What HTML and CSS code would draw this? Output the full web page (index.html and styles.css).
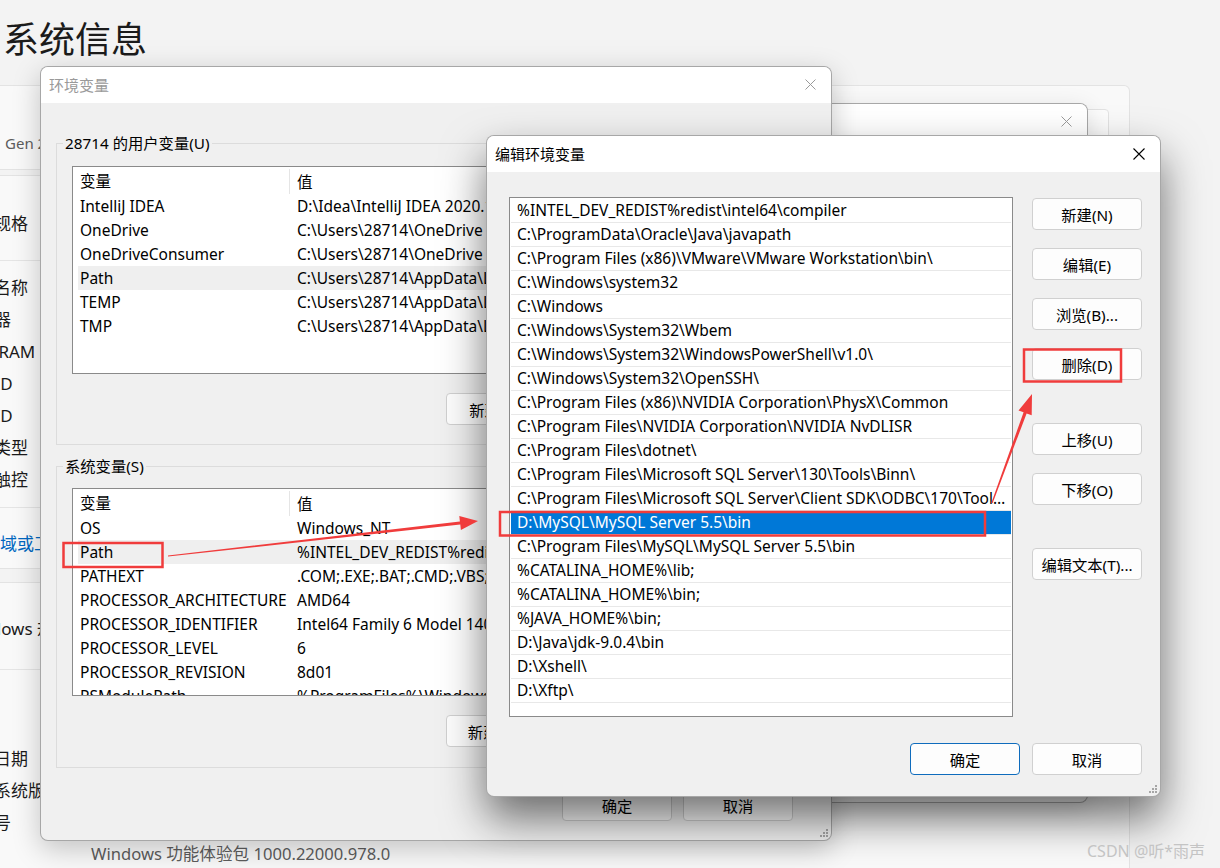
FILE: index.html
```html
<!DOCTYPE html>
<html lang="zh-CN">
<head>
<meta charset="utf-8">
<title>编辑环境变量</title>
<link rel="stylesheet" href="styles.css">
</head>
<body>
<main class="settings">
  <h1 class="page-title">系统信息</h1>
  <section class="card card-device">
    <div class="device-model">Gen 2</div>
    <button class="rename-btn">重命名这台电脑</button>
  </section>
  <section class="card card-spec">
    <div class="card-head"><span class="lbl">设备规格</span></div>
    <div class="spec-list">
      <div class="spec-row"><span class="lbl">设备名称</span></div>
      <div class="spec-row"><span class="lbl">处理器</span></div>
      <div class="spec-row"><span class="lbl">机带 RAM</span></div>
      <div class="spec-row"><span class="lbl lbl-id">设备 ID</span></div>
      <div class="spec-row"><span class="lbl lbl-id">产品 ID</span></div>
      <div class="spec-row"><span class="lbl">系统类型</span></div>
      <div class="spec-row"><span class="lbl">笔和触控</span></div>
    </div>
    <div class="links"><a class="link">域或工作组</a></div>
  </section>
  <section class="card card-win">
    <div class="card-head card-head-win"><span class="lbl">Windows 规格</span></div>
    <div class="spec-list spec-list-win">
      <div class="spec-row"><span class="lbl">版本</span></div>
      <div class="spec-row"><span class="lbl">版本</span></div>
      <div class="spec-row"><span class="lbl">安装日期</span></div>
      <div class="spec-row"><span class="lbl">操作系统版本</span></div>
      <div class="spec-row"><span class="lbl">序列号</span></div>
      <div class="spec-row"><span class="lbl">体验</span><span class="val">Windows 功能体验包 1000.22000.978.0</span></div>
    </div>
  </section>
</main>

<div class="win win-sysprop">
  <div class="titlebar inactive">
    <span class="title">系统属性</span>
    <svg class="close" width="11" height="11" viewBox="0 0 11 11"><path d="M0.5 0.5L10.5 10.5M10.5 0.5L0.5 10.5" stroke="currentColor" stroke-width="1" fill="none"/></svg>
  </div>
</div>

<div class="win win-env">
  <div class="titlebar inactive">
    <span class="title">环境变量</span>
    <svg class="close" width="11" height="11" viewBox="0 0 11 11"><path d="M0.5 0.5L10.5 10.5M10.5 0.5L0.5 10.5" stroke="currentColor" stroke-width="1" fill="none"/></svg>
  </div>
  <div class="env-body">
    <fieldset class="group group-user">
      <legend>28714 的用户变量(U)</legend>
      <div class="listview env-lv">
        <div class="lv-head"><div class="c1">变量</div><div class="c2">值</div></div>
        <div class="lv-row"><div class="c1">IntelliJ IDEA</div><div class="c2">D:\Idea\IntelliJ IDEA 2020.1\bin;</div></div>
        <div class="lv-row"><div class="c1">OneDrive</div><div class="c2">C:\Users\28714\OneDrive</div></div>
        <div class="lv-row"><div class="c1">OneDriveConsumer</div><div class="c2">C:\Users\28714\OneDrive</div></div>
        <div class="lv-row hl"><div class="c1">Path</div><div class="c2">C:\Users\28714\AppData\Local\Microsoft\WindowsApps;</div></div>
        <div class="lv-row"><div class="c1">TEMP</div><div class="c2">C:\Users\28714\AppData\Local\Temp</div></div>
        <div class="lv-row"><div class="c1">TMP</div><div class="c2">C:\Users\28714\AppData\Local\Temp</div></div>
      </div>
      <div class="group-btns">
        <button class="btn">新建(N)...</button>
        <button class="btn">编辑(E)...</button>
        <button class="btn">删除(D)</button>
      </div>
    </fieldset>
    <fieldset class="group group-sys">
      <legend>系统变量(S)</legend>
      <div class="listview env-lv env-lv-sys">
        <div class="lv-head"><div class="c1">变量</div><div class="c2">值</div></div>
        <div class="lv-row"><div class="c1">OS</div><div class="c2">Windows_NT</div></div>
        <div class="lv-row hl"><div class="c1">Path</div><div class="c2">%INTEL_DEV_REDIST%redist\intel64\compiler;C:\ProgramData\Oracle\Java\javapath</div></div>
        <div class="lv-row"><div class="c1">PATHEXT</div><div class="c2">.COM;.EXE;.BAT;.CMD;.VBS;.VBE;.JS;.JSE;.WSF;.WSH;.MSC</div></div>
        <div class="lv-row"><div class="c1">PROCESSOR_ARCHITECTURE</div><div class="c2">AMD64</div></div>
        <div class="lv-row"><div class="c1">PROCESSOR_IDENTIFIER</div><div class="c2">Intel64 Family 6 Model 140 Stepping 1, GenuineIntel</div></div>
        <div class="lv-row"><div class="c1">PROCESSOR_LEVEL</div><div class="c2">6</div></div>
        <div class="lv-row"><div class="c1">PROCESSOR_REVISION</div><div class="c2">8d01</div></div>
        <div class="lv-row"><div class="c1">PSModulePath</div><div class="c2">%ProgramFiles%\WindowsPowerShell\Modules</div></div>
      </div>
      <div class="group-btns">
        <button class="btn">新建(W)...</button>
        <button class="btn">编辑(I)...</button>
        <button class="btn">删除(L)</button>
      </div>
    </fieldset>
    <div class="dlg-footer env-footer">
      <button class="btn">确定</button>
      <button class="btn">取消</button>
    </div>
  </div>
  <svg class="grip" width="9" height="9" viewBox="0 0 9 9"><g fill="#a6a6a6"><rect x="7" y="1" width="2" height="2"/><rect x="4" y="4" width="2" height="2"/><rect x="7" y="4" width="2" height="2"/><rect x="1" y="7" width="2" height="2"/><rect x="4" y="7" width="2" height="2"/><rect x="7" y="7" width="2" height="2"/></g></svg>
</div>

<div class="win win-edit">
  <div class="titlebar">
    <span class="title">编辑环境变量</span>
    <svg class="close" width="12" height="12" viewBox="0 0 12 12"><path d="M0.5 0.5L11.5 11.5M11.5 0.5L0.5 11.5" stroke="currentColor" stroke-width="1.1" fill="none"/></svg>
  </div>
  <div class="edit-body">
    <div class="listview edit-lv">
      <div class="path-row">%INTEL_DEV_REDIST%redist\intel64\compiler</div>
      <div class="path-row">C:\ProgramData\Oracle\Java\javapath</div>
      <div class="path-row">C:\Program Files (x86)\VMware\VMware Workstation\bin\</div>
      <div class="path-row">C:\Windows\system32</div>
      <div class="path-row">C:\Windows</div>
      <div class="path-row">C:\Windows\System32\Wbem</div>
      <div class="path-row">C:\Windows\System32\WindowsPowerShell\v1.0\</div>
      <div class="path-row">C:\Windows\System32\OpenSSH\</div>
      <div class="path-row">C:\Program Files (x86)\NVIDIA Corporation\PhysX\Common</div>
      <div class="path-row">C:\Program Files\NVIDIA Corporation\NVIDIA NvDLISR</div>
      <div class="path-row">C:\Program Files\dotnet\</div>
      <div class="path-row">C:\Program Files\Microsoft SQL Server\130\Tools\Binn\</div>
      <div class="path-row">C:\Program Files\Microsoft SQL Server\Client SDK\ODBC\170\Tools\Binn\</div>
      <div class="path-row sel">D:\MySQL\MySQL Server 5.5\bin</div>
      <div class="path-row">C:\Program Files\MySQL\MySQL Server 5.5\bin</div>
      <div class="path-row">%CATALINA_HOME%\lib;</div>
      <div class="path-row">%CATALINA_HOME%\bin;</div>
      <div class="path-row">%JAVA_HOME%\bin;</div>
      <div class="path-row">D:\Java\jdk-9.0.4\bin</div>
      <div class="path-row">D:\Xshell\</div>
      <div class="path-row">D:\Xftp\</div>
    </div>
    <div class="edit-side">
      <button class="btn">新建(N)</button>
      <button class="btn">编辑(E)</button>
      <button class="btn">浏览(B)...</button>
      <button class="btn">删除(D)</button>
      <button class="btn gap-before">上移(U)</button>
      <button class="btn">下移(O)</button>
      <button class="btn gap-before">编辑文本(T)...</button>
    </div>
  </div>
  <div class="dlg-footer edit-footer">
    <button class="btn default">确定</button>
    <button class="btn">取消</button>
  </div>
  <svg class="grip" width="9" height="9" viewBox="0 0 9 9"><g fill="#a6a6a6"><rect x="7" y="1" width="2" height="2"/><rect x="4" y="4" width="2" height="2"/><rect x="7" y="4" width="2" height="2"/><rect x="1" y="7" width="2" height="2"/><rect x="4" y="7" width="2" height="2"/><rect x="7" y="7" width="2" height="2"/></g></svg>
</div>

<svg class="annot" width="1220" height="868" viewBox="0 0 1220 868">
  <g fill="none" stroke="#f03c3c" stroke-width="2.5">
    <rect x="63.5" y="543" width="99" height="24"/>
    <rect x="500" y="512" width="485" height="23.5"/>
    <rect x="1024" y="349.5" width="97" height="32"/>
  </g>
  <g fill="#f03c3c">
    <polygon points="168,555.4 459.9,521.5 459.3,516 478,521 460.9,530 460.3,524.5 168,556.6"/>
    <polygon points="991.4,502.8 1023.6,412.2 1018.5,410.4 1032,394 1031.7,415.2 1026.6,413.4 992.6,503.2"/>
  </g>
</svg>

<div class="watermark">CSDN @听*雨声</div>
</body>
</html>
```

FILE: styles.css
```css
* { box-sizing: border-box; }
html, body { margin: 0; padding: 0; }
body {
  width: 1220px;
  height: 868px;
  overflow: hidden;
  position: relative;
  background: #f3f3f3;
  font-family: "Noto Sans", "Noto Sans CJK SC", sans-serif;
  color: #1b1b1b;
}

/* ---------- settings page behind ---------- */
.settings { width: 1130px; height: 868px; overflow: hidden; }
.page-title {
  margin: 0;
  height: 65px;
  padding: 15px 0 0 3px;
  font-size: 36px;
  line-height: 50px;
  font-weight: 400;
  color: #1b1b1b;
}
.card {
  width: 1130px;
  background: #f9f9f9;
  border: 1px solid #e3e3e3;
  border-left: 0;
  border-radius: 0 6px 6px 0;
}
.card-device {
  margin-top: 20px;
  height: 85px;
  display: flex;
  justify-content: space-between;
  align-items: flex-start;
  padding: 0 20px 0 5px;
}
.device-model {
  font-size: 15px;
  line-height: 22px;
  padding-top: 46px;
  color: #5d5d5d;
}
.rename-btn {
  margin-top: 23px;
  width: 150px;
  height: 37px;
  border: 1px solid #e3e3e3;
  border-radius: 4px;
  background: #fdfdfd;
  font-family: inherit;
  font-size: 15px;
  color: #1b1b1b;
}
.card-spec { margin-top: 5px; }
.card-head {
  height: 85px;
  border-bottom: 1px solid #e5e5e5;
  display: flex;
  align-items: center;
  padding-top: 8px;
}
.card-head-win { height: 87px; padding-top: 3px; }
.spec-list { padding: 9px 0 13px; }
.spec-list-win { padding: 7px 0 0; }
.spec-row {
  height: 32px;
  display: flex;
  align-items: center;
}
.lbl {
  margin-left: -40px;
  width: 131px;
  flex: none;
  font-size: 17px;
  white-space: nowrap;
  color: #1b1b1b;
}
.lbl.lbl-id { margin-left: -44px; }
.val {
  font-size: 16.6px;
  white-space: nowrap;
  color: #5d5d5d;
}
.links {
  height: 61px;
  border-top: 1px solid #e5e5e5;
  display: flex;
  align-items: center;
  padding-top: 8px;
}
.link { font-size: 17px; color: #0067c0; white-space: nowrap; }
.card-win {
  margin-top: 13px;
  height: 286px;
  overflow: hidden;
  border-bottom: 0;
  border-radius: 0 6px 0 0;
}

/* ---------- windows ---------- */
.win {
  position: absolute;
  background: #f0f0f0;
  border: 1px solid rgba(0, 0, 0, 0.3);
  border-radius: 8px;
  overflow: hidden;
}
.titlebar {
  height: 36px;
  background: #fff;
  display: flex;
  align-items: center;
  justify-content: space-between;
  padding: 0 15px 1px 8px;
  font-size: 15px;
  color: #000;
}
.titlebar.inactive { color: #9a9a9a; }
.close { display: block; }

.win-sysprop {
  left: 300px;
  top: 103px;
  width: 788px;
  height: 700px;
  box-shadow: 0 6px 24px rgba(0, 0, 0, 0.12);
}
.win-env {
  left: 40px;
  top: 66px;
  width: 792px;
  height: 775px;
  box-shadow: 0 8px 28px rgba(0, 0, 0, 0.22);
}
.win-edit {
  left: 486px;
  top: 135px;
  width: 675px;
  height: 662px;
  box-shadow: 0 22px 44px rgba(0, 0, 0, 0.55);
}

/* env dialog */
.group {
  margin: 0 0 0 15px;
  width: 760px;
  min-width: 0;
  border: 1px solid #dcdcdc;
  padding: 0 0 19px 6px;
}
.group legend {
  padding: 0 2px;
  font-size: 15.3px;
  line-height: 20px;
  color: #000;
}
.group-user { margin-top: 30px; }
.group-sys { margin-top: 11px; padding-bottom: 20px; }
.listview {
  background: #fff;
  border: 1px solid #8a8a8a;
  overflow: hidden;
}
.env-lv {
  margin: 13px 0 0 9px;
  width: 727px;
  height: 208px;
}
.env-lv-sys { margin-top: 12px; }
.lv-head {
  display: flex;
  height: 27px;
  padding-top: 2px;
  align-items: center;
  font-size: 15.5px;
  color: #000;
}
.lv-head .c1 {
  width: 217px;
  padding-left: 7px;
  line-height: 25px;
  border-right: 1px solid #e5e5e5;
}
.lv-head .c2 { padding-left: 7px; }
.lv-row {
  display: flex;
  height: 24px;
  line-height: 24px;
  margin-left: 5px;
  font-size: 15.5px;
  color: #000;
  white-space: nowrap;
}
.lv-row .c1 { width: 212px; flex: none; padding-left: 2px; overflow: hidden; }
.lv-row .c2 { padding-left: 7px; }
.lv-row.hl { background: #efefef; }
.group-btns {
  display: flex;
  gap: 11px;
  margin: 19px 0 0 383px;
}
.btn {
  width: 110px;
  height: 32px;
  flex: none;
  padding: 0;
  border: 1px solid #d0d0d0;
  border-radius: 4px;
  background: #fdfdfd;
  font-family: inherit;
  font-size: 15.3px;
  color: #000;
}
.btn.default { border-color: #0f6cbd; }
.dlg-footer {
  display: flex;
  justify-content: flex-end;
}
.env-footer { gap: 11px; padding-right: 38px; margin-top: 21px; }
.grip { position: absolute; right: 3px; bottom: 3px; }

/* edit dialog */
.edit-body {
  display: flex;
  align-items: flex-start;
  padding: 25px 0 0 22px;
}
.edit-lv {
  width: 504px;
  height: 520px;
  padding: 1px 1px 0;
}
.path-row {
  height: 24px;
  line-height: 23px;
  border-bottom: 1px solid #e8e8e8;
  padding: 0 3px 0 6px;
  font-size: 15.5px;
  color: #000;
  white-space: nowrap;
  overflow: hidden;
  text-overflow: ellipsis;
}
.path-row.sel { background: #0078d7; color: #fff; }
.edit-side {
  display: flex;
  flex-direction: column;
  gap: 18px;
  margin: 1px 0 0 19px;
}
.edit-side .gap-before { margin-top: 25px; }
.edit-footer { gap: 12px; padding-right: 18px; margin-top: 26px; }

/* overlays */
.annot {
  position: absolute;
  left: 0;
  top: 0;
  pointer-events: none;
}
.watermark {
  position: absolute;
  left: 1087px;
  top: 840px;
  font-size: 16px;
  line-height: 22px;
  color: #c4c4c4;
  white-space: nowrap;
}
```
